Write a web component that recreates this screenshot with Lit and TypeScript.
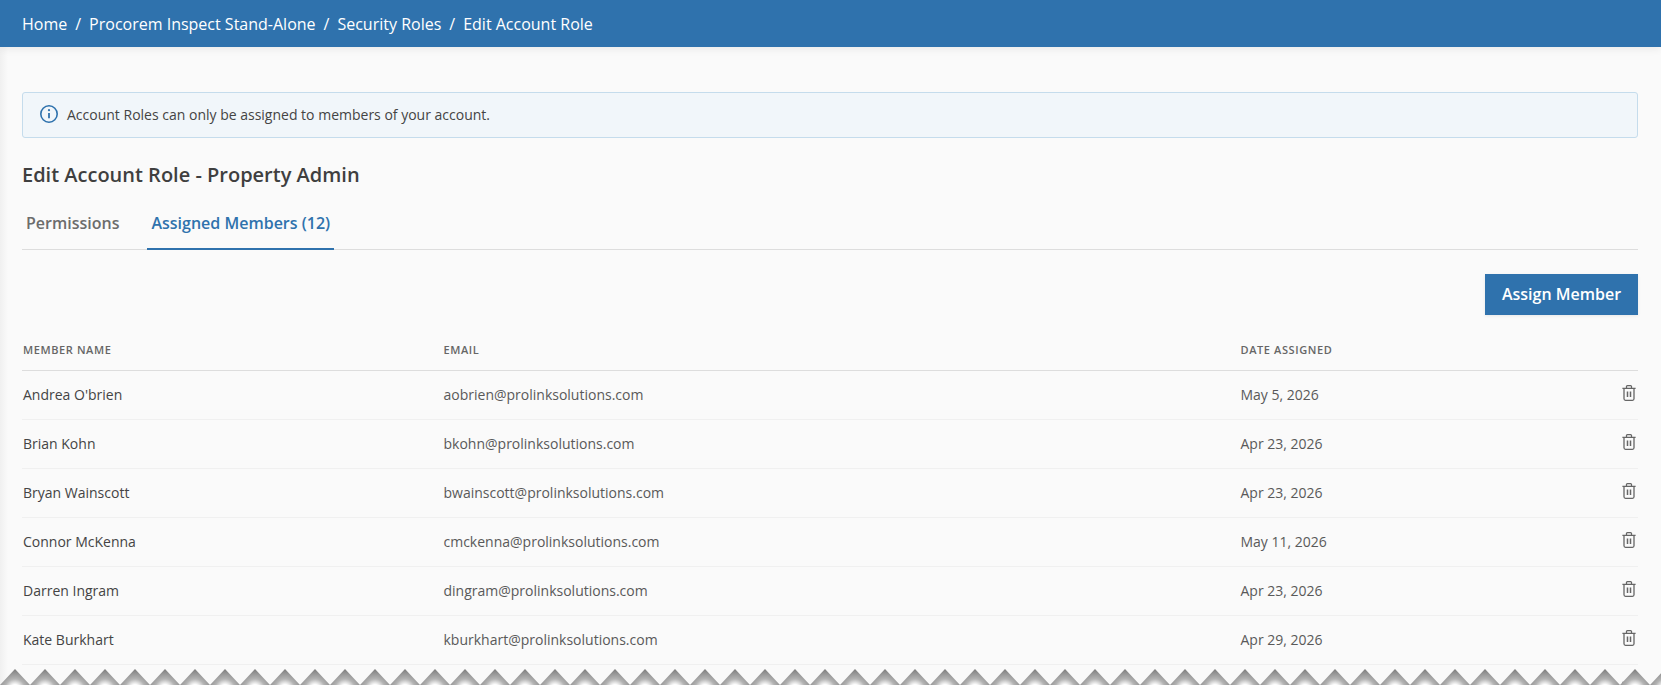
import { LitElement, html, css, svg } from 'lit';
import { customElement } from 'lit/decorators.js';

const members = [
	{ name: "Andrea O'brien", email: 'aobrien@prolinksolutions.com', date: 'May 5, 2026' },
	{ name: 'Brian Kohn', email: 'bkohn@prolinksolutions.com', date: 'Apr 23, 2026' },
	{ name: 'Bryan Wainscott', email: 'bwainscott@prolinksolutions.com', date: 'Apr 23, 2026' },
	{ name: 'Connor McKenna', email: 'cmckenna@prolinksolutions.com', date: 'May 11, 2026' },
	{ name: 'Darren Ingram', email: 'dingram@prolinksolutions.com', date: 'Apr 23, 2026' },
	{ name: 'Kate Burkhart', email: 'kburkhart@prolinksolutions.com', date: 'Apr 29, 2026' },
	// next row, only its icon shows between the torn edge teeth
	{ name: '', email: '', date: '' },
];

const crumbs = ['Home', 'Procorem Inspect Stand-Alone', 'Security Roles', 'Edit Account Role'];

const trash = svg`<svg class="trash" viewBox="0 0 14 16" width="14" height="16" fill="none" stroke="#666" stroke-width="1.3">
	<path d="M0.4 3.4h13.2M4.5 3.4V1.6c0-.5.3-.9.9-.9h3.2c.6 0 .9.4.9.9v1.8M2 3.4v10.4c0 .9.6 1.5 1.5 1.5h7c.9 0 1.5-.6 1.5-1.5V3.4" />
	<path d="M5.5 6.5v5.6M8.5 6.5v5.6" stroke-width="1.5" />
</svg>`;

@customElement('app-root')
export class AppRoot extends LitElement {
	static styles = css`
		:host {
			display: block;
			height: 685px;
			overflow: hidden;
			position: relative;
			background: #fafafa;
			font-family: 'Open Sans', sans-serif;
			color: #444;
		}
		.topbar {
			height: 47px;
			background: #2f72ad;
			display: flex;
			align-items: center;
			padding-left: 22px;
			color: #fff;
			font-size: 16px;
			box-shadow: 0 2px 8px rgba(0, 0, 0, 0.07);
			position: relative;
		}
		.sep {
			margin: 0 8px;
		}
		.main {
			padding: 45px 23px 0 22px;
			background: linear-gradient(to right, #f0f0f0, #fafafa 8px);
		}
		.notice {
			height: 46px;
			box-sizing: border-box;
			display: flex;
			align-items: center;
			gap: 8px;
			padding: 0 0 2px 16px;
			background: #f1f6fa;
			border: 1px solid #c5dcec;
			border-radius: 3px;
			font-size: 14px;
		}
		h1 {
			margin: 24px 0 0;
			font-size: 20px;
			line-height: 26px;
			font-weight: 600;
			color: #3f3f3f;
		}
		.tabs {
			display: flex;
			margin-top: 13px;
			height: 49px;
			box-sizing: border-box;
			border-bottom: 1px solid #ddd;
			font-size: 16px;
			font-weight: 600;
		}
		.tab {
			padding: 0 4px;
			margin-right: 24px;
			line-height: 44px;
			color: #6c6c6c;
		}
		.tab.active {
			color: #2f72ad;
			height: 49px;
			box-sizing: border-box;
			border-bottom: 2px solid #2f72ad;
		}
		.actions {
			display: flex;
			justify-content: flex-end;
			margin-top: 24px;
		}
		button {
			width: 153px;
			height: 41px;
			padding: 0 0 2px;
			border: none;
			background: #2f72ad;
			color: #fff;
			font: 600 16px 'Open Sans', sans-serif;
			box-shadow: 0 1px 3px rgba(0, 0, 0, 0.08);
		}
		.row {
			display: grid;
			grid-template-columns: 421.5px 797px 1fr 24px;
			align-items: center;
			height: 49px;
			box-sizing: border-box;
			padding-bottom: 2px;
			border-bottom: 1px solid #f0f0f0;
			font-size: 14px;
		}
		.row > :first-child {
			padding-left: 1px;
		}
		.row.head {
			height: 56px;
			padding: 14px 0 0;
			border-bottom: 1px solid #ddd;
			font-size: 11px;
			font-weight: 600;
			letter-spacing: 0.6px;
			color: #666;
		}
		.cell-email,
		.cell-date {
			color: #595959;
		}
		.trash {
			display: block;
			justify-self: end;
			margin: 0 2px 3px 0;
		}
		.torn {
			position: absolute;
			left: 0;
			bottom: 0;
			display: block;
		}
	`;

	render() {
		return html`
			<div class="topbar">
				${crumbs.map((c, i) => html`${i > 0 ? html`<span class="sep">/</span>` : ''}<span>${c}</span>`)}
			</div>
			<div class="main">
				<div class="notice">
					<svg width="20" height="20" viewBox="0 0 20 20" fill="none" stroke="#2f72ad">
						<circle cx="10" cy="10" r="8.2" stroke-width="1.6" />
						<path d="M10 9v5.2" stroke-width="1.8" />
						<circle cx="10" cy="6.2" r="1.1" fill="#2f72ad" stroke="none" />
					</svg>
					<span>Account Roles can only be assigned to members of your account.</span>
				</div>
				<h1>Edit Account Role - Property Admin</h1>
				<div class="tabs">
					<div class="tab">Permissions</div>
					<div class="tab active">Assigned Members (12)</div>
				</div>
				<div class="actions"><button>Assign Member</button></div>
				<div class="row head">
					<span>MEMBER NAME</span><span>EMAIL</span><span>DATE ASSIGNED</span><span></span>
				</div>
				${members.map(
					(m) => html`<div class="row">
						<span>${m.name}</span>
						<span class="cell-email">${m.email}</span>
						<span class="cell-date">${m.date}</span>
						${trash}
					</div>`
				)}
			</div>
			<svg class="torn" width="1661" height="16" viewBox="0 0 1661 16">
				<defs>
					<radialGradient id="shade" gradientUnits="userSpaceOnUse" cx="15" cy="20" r="20">
						<stop offset="0.22" stop-color="#ffffff" />
						<stop offset="0.5" stop-color="#b4b4b4" />
						<stop offset="1" stop-color="#7c7c7c" />
					</radialGradient>
					<pattern id="teeth" width="30" height="16" patternUnits="userSpaceOnUse">
						<path d="M0 16L15 0L30 16Z" fill="url(#shade)" />
					</pattern>
				</defs>
				<rect width="1661" height="16" fill="url(#teeth)" />
			</svg>
		`;
	}
}
